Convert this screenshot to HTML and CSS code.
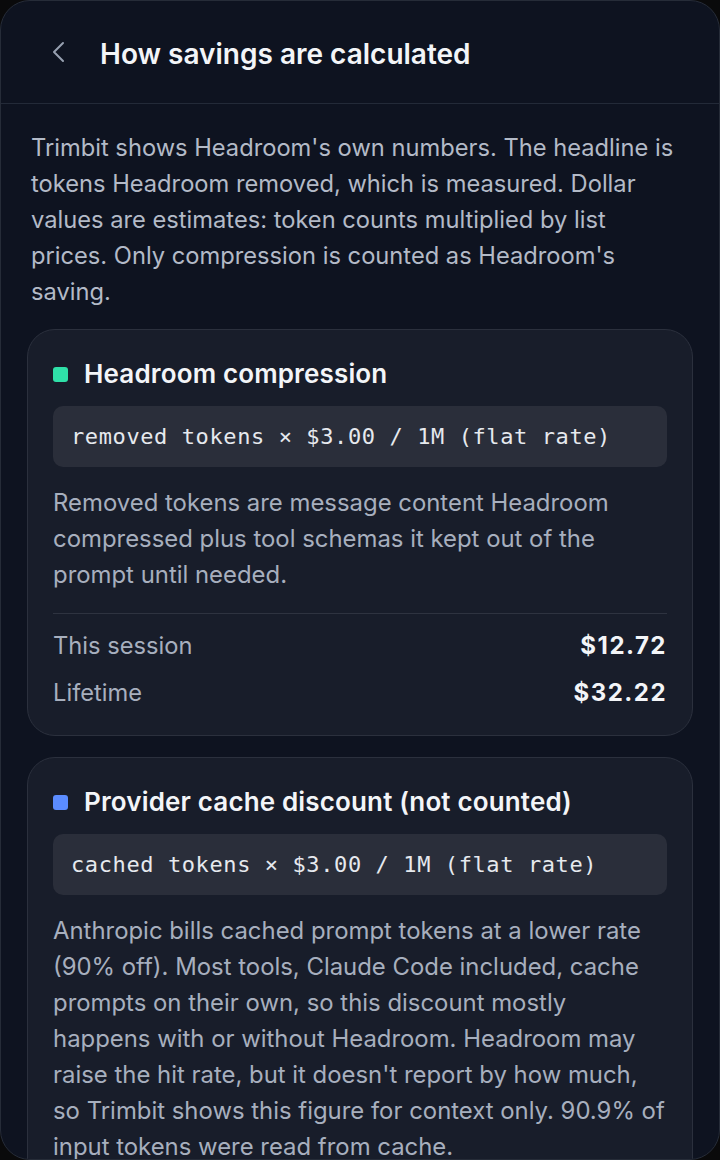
FILE: index.html
```html
<!DOCTYPE html>
<html lang="en">
<head>
    <meta charset="UTF-8">
    <meta name="viewport" content="width=device-width, initial-scale=1.0">
    <title>How savings are calculated</title>
    <link rel="stylesheet" href="styles.css">
</head>
<body>

    <div class="sheet">
        <header class="sheet-header">
            <button class="back-btn" aria-label="Back">
                <svg width="16" height="22" viewBox="0 0 16 22" fill="none">
                    <path d="M12 2 L3 11 L12 20" stroke="currentColor" stroke-width="2" stroke-linecap="round" stroke-linejoin="round"/>
                </svg>
            </button>
            <h1>How savings are calculated</h1>
        </header>

        <div class="sheet-body">
            <p class="intro">Trimbit shows Headroom's own numbers. The headline is tokens Headroom removed, which is measured. Dollar values are estimates: token counts multiplied by list prices. Only compression is counted as Headroom's saving.</p>

            <section class="card">
                <h2><span class="dot dot-green"></span>Headroom compression</h2>
                <div class="formula">removed tokens × $3.00 / 1M (flat rate)</div>
                <p class="desc">Removed tokens are message content Headroom compressed plus tool schemas it kept out of the prompt until needed.</p>
                <div class="totals">
                    <div class="row"><span>This session</span><strong>$12.72</strong></div>
                    <div class="row"><span>Lifetime</span><strong>$32.22</strong></div>
                </div>
            </section>

            <section class="card">
                <h2><span class="dot dot-blue"></span>Provider cache discount (not counted)</h2>
                <div class="formula">cached tokens × $3.00 / 1M (flat rate)</div>
                <p class="desc">Anthropic bills cached prompt tokens at a lower rate (90% off). Most tools, Claude Code included, cache prompts on their own, so this discount mostly happens with or without Headroom. Headroom may raise the hit rate, but it doesn't report by how much, so Trimbit shows this figure for context only. 90.9% of input tokens were read from cache.</p>
            </section>
        </div>
    </div>

</body>
</html>
```

FILE: styles.css
```css
body {
    background: #0a0a0b;
    margin: 0;
    font-family: Inter, "Noto Sans", sans-serif;
}
.sheet {
    box-sizing: border-box;
    height: 100vh;
    overflow: hidden;
    background: #0e1320;
    border: 1px solid #262c38;
    border-radius: 30px;
}
.sheet-header {
    display: flex;
    align-items: center;
    gap: 33px;
    height: 102px;
    padding: 0 50px;
    border-bottom: 1px solid #232a38;
}
.back-btn {
    display: flex;
    padding: 0;
    background: none;
    border: none;
    color: #97a0b0;
}
.sheet-header h1 {
    margin: 3px 0 0;
    color: #f3f5f8;
    font-size: 28px;
    font-weight: 600;
}
.sheet-body {
    padding: 26px 26px;
}
.intro {
    margin: 0 0 19px;
    padding: 0 16px 0 4px;
    color: #b3bac7;
    font-size: 23.7px;
    line-height: 36px;
}
.card {
    background: #181d2a;
    border: 1px solid #2b303d;
    border-radius: 28px;
    padding: 24px 25px;
    margin-bottom: 21px;
}
.card h2 {
    display: flex;
    align-items: center;
    gap: 16px;
    margin: 0 0 12px;
    color: #f3f5f8;
    font-size: 26px;
    font-weight: 600;
    letter-spacing: 0.15px;
    line-height: 40px;
}
.dot {
    width: 15px;
    height: 15px;
    border-radius: 3px;
}
.dot-green {
    background: #2fe0a8;
}
.dot-blue {
    background: #5b8cff;
}
.formula {
    background: #2a2e3a;
    border-radius: 10px;
    padding: 15px 18px;
    color: #e6e9ee;
    font-family: "DejaVu Sans Mono", monospace;
    font-size: 22px;
    letter-spacing: 0.6px;
    line-height: 31px;
}
.desc {
    margin: 18px 0 0;
    color: #a7afbe;
    font-size: 23.9px;
    line-height: 36px;
}
.totals {
    margin-top: 20px;
    padding-top: 14px;
    border-top: 1px solid #2e3340;
}
.row {
    display: flex;
    justify-content: space-between;
    align-items: baseline;
    color: #a7afbe;
    font-size: 23.7px;
    line-height: 36px;
}
.row + .row {
    margin-top: 11px;
}
.row strong {
    color: #f3f5f8;
    font-size: 24px;
    font-weight: 700;
    letter-spacing: 1.5px;
}
```
